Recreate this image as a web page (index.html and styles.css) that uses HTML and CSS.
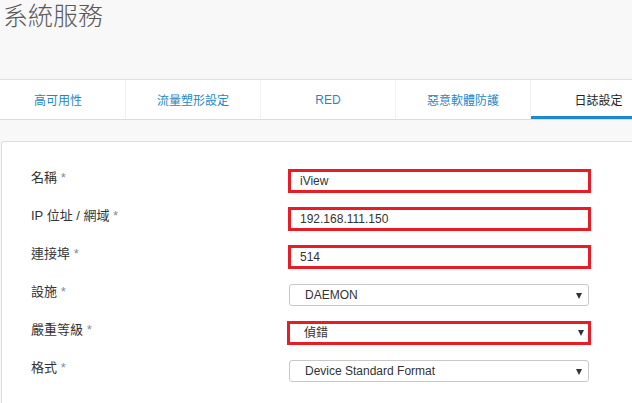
FILE: index.html
```html
<!DOCTYPE html>
<html lang="zh-Hant">
<head>
    <meta charset="UTF-8">
    <meta name="viewport" content="width=device-width, initial-scale=1.0">
    <title>系統服務</title>
    <link rel="stylesheet" href="styles.css">
</head>
<body>
    <div class="page">
        <h1 class="title">系統服務</h1>

        <div class="tabs">
            <div class="tab first">高可用性</div>
            <div class="tab">流量塑形設定</div>
            <div class="tab">RED</div>
            <div class="tab">惡意軟體防護</div>
            <div class="tab active">日誌設定</div>
        </div>

        <div class="panel">
            <div class="row">
                <label class="label" for="name">名稱 <span class="req">*</span></label>
                <input class="field mark" type="text" id="name" value="iView">
            </div>
            <div class="row">
                <label class="label" for="ip">IP 位址 / 網域 <span class="req">*</span></label>
                <input class="field mark" type="text" id="ip" value="192.168.111.150">
            </div>
            <div class="row">
                <label class="label" for="port">連接埠 <span class="req">*</span></label>
                <input class="field mark" type="text" id="port" value="514">
            </div>
            <div class="row">
                <label class="label" for="facility">設施 <span class="req">*</span></label>
                <div class="select-wrap">
                    <select class="field select" id="facility">
                        <option>DAEMON</option>
                    </select>
                </div>
            </div>
            <div class="row">
                <label class="label" for="severity">嚴重等級 <span class="req">*</span></label>
                <div class="select-wrap">
                    <select class="field select mark" id="severity">
                        <option>偵錯</option>
                    </select>
                </div>
            </div>
            <div class="row">
                <label class="label" for="format">格式 <span class="req">*</span></label>
                <div class="select-wrap">
                    <select class="field select" id="format">
                        <option>Device Standard Format</option>
                    </select>
                </div>
            </div>
        </div>
    </div>
</body>
</html>
```

FILE: styles.css
```css
html, body {
    margin: 0;
    height: 100%;
    overflow: hidden;
}

body {
    font-family: "Liberation Sans", Arial, "Noto Sans CJK TC", sans-serif;
    background-color: #f8f8f8;
    color: #333;
}

.page {
    width: 632px;
    height: 403px;
    overflow: hidden;
}

.title {
    box-sizing: border-box;
    margin: 0;
    padding: 1px 0 0 3px;
    height: 79px;
    font-family: "Noto Sans CJK TC", sans-serif;
    font-size: 25px;
    font-weight: 300;
    line-height: 26px;
    color: #5a5a5a;
}

/* tab bar */
.tabs {
    display: flex;
    height: 39px;
    background-color: #fff;
    border-top: 1px solid #e0e0e0;
    border-bottom: 1px solid #dcdcdc;
}

.tab {
    flex: 0 0 135px;
    display: flex;
    justify-content: center;
    align-items: center;
    font-size: 12px;
    color: #1f87c7;
    border-right: 1px solid #f2f2f2;
    box-sizing: border-box;
}

.tab.first {
    flex-basis: 126px;
    padding-right: 9px;
}

.tab.active {
    flex-basis: 101px;
    padding: 3px 0 0 34px;
    color: #222;
    border-right: none;
    border-bottom: 3px solid #1e88d0;
}

/* form panel */
.panel {
    box-sizing: border-box;
    margin: 21px 0 0 1px;
    padding: 20px 0 0 29px;
    height: 262px;
    background-color: #fff;
    border: 1px solid #dedede;
    border-right: none;
    border-bottom: none;
    border-radius: 3px 0 0 0;
}

.row {
    display: flex;
    align-items: center;
    height: 38px;
}

.label {
    width: 258px;
    padding-bottom: 7px;
    font-size: 13px;
    line-height: 16px;
    color: #333;
}

.req {
    color: #7b8da3;
}

.field {
    box-sizing: border-box;
    width: 300px;
    height: 22px;
    margin: 0;
    padding: 0 0 0 11px;
    font-family: "Liberation Sans", Arial, "Noto Sans CJK TC", sans-serif;
    font-size: 12px;
    color: #333;
    background-color: #fff;
    border: 1px solid #c8c8c8;
    border-radius: 3px;
    outline: none;
}

.select {
    appearance: none;
    -webkit-appearance: none;
    padding-left: 15px;
}

.select-wrap {
    position: relative;
}

.select-wrap::after {
    content: "";
    position: absolute;
    right: 7px;
    top: 9px;
    border-left: 3.5px solid transparent;
    border-right: 3.5px solid transparent;
    border-top: 6px solid #333;
    pointer-events: none;
}

/* red highlight boxes */
.field.mark {
    width: 303px;
    height: 24px;
    margin-left: -1px;
    padding-left: 9px;
    border: 3px solid #e81c24;
    border-radius: 0;
}

.select.mark {
    margin-left: -2px;
    width: 304px;
    padding-left: 14px;
}
```
